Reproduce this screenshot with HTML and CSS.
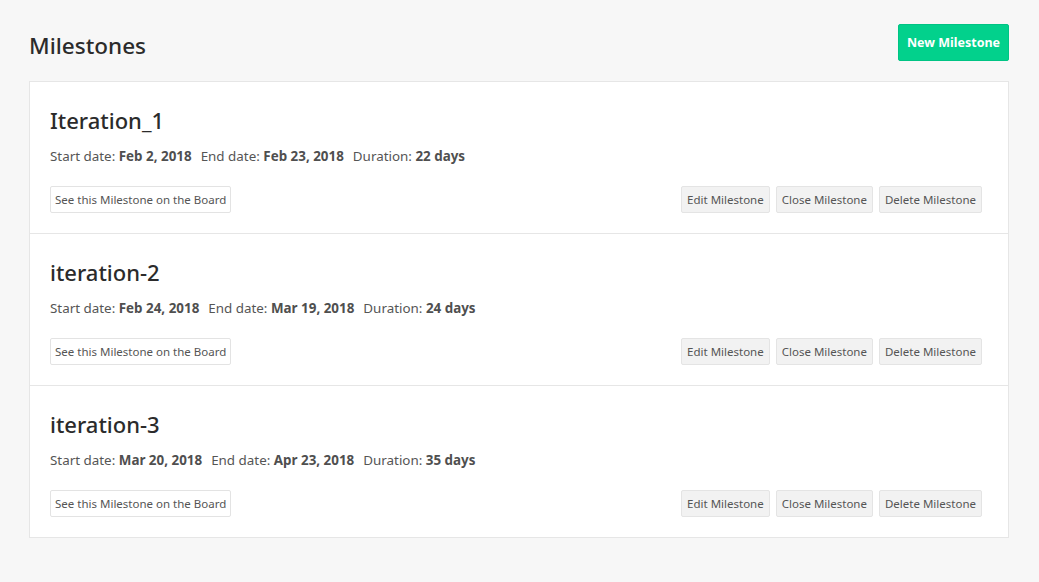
FILE: index.html
```html
<!DOCTYPE html>
<html>
<head>
<meta charset="utf-8">
<link rel="stylesheet" href="styles.css">
</head>
<body>
<div class="page">
  <header class="head">
    <h1 class="title">Milestones</h1>
    <button class="btn-new">New Milestone</button>
  </header>
  <div class="card">
    <div class="item">
      <h2 class="name">Iteration_1</h2>
      <p class="meta">Start date: <b>Feb 2, 2018</b><span class="sep"></span>End date: <b>Feb 23, 2018</b><span class="sep"></span>Duration: <b>22 days</b></p>
      <div class="actions">
        <button class="btn btn-light">See this Milestone on the Board</button>
        <div class="right">
          <button class="btn btn-gray">Edit Milestone</button>
          <button class="btn btn-gray">Close Milestone</button>
          <button class="btn btn-gray">Delete Milestone</button>
        </div>
      </div>
    </div>
    <div class="item">
      <h2 class="name">iteration-2</h2>
      <p class="meta">Start date: <b>Feb 24, 2018</b><span class="sep"></span>End date: <b>Mar 19, 2018</b><span class="sep"></span>Duration: <b>24 days</b></p>
      <div class="actions">
        <button class="btn btn-light">See this Milestone on the Board</button>
        <div class="right">
          <button class="btn btn-gray">Edit Milestone</button>
          <button class="btn btn-gray">Close Milestone</button>
          <button class="btn btn-gray">Delete Milestone</button>
        </div>
      </div>
    </div>
    <div class="item">
      <h2 class="name">iteration-3</h2>
      <p class="meta">Start date: <b>Mar 20, 2018</b><span class="sep"></span>End date: <b>Apr 23, 2018</b><span class="sep"></span>Duration: <b>35 days</b></p>
      <div class="actions">
        <button class="btn btn-light">See this Milestone on the Board</button>
        <div class="right">
          <button class="btn btn-gray">Edit Milestone</button>
          <button class="btn btn-gray">Close Milestone</button>
          <button class="btn btn-gray">Delete Milestone</button>
        </div>
      </div>
    </div>
  </div>
</div>
</body>
</html>
```

FILE: styles.css
```css
html, body {
  margin: 0;
  padding: 0;
  background: #f7f7f7;
}
body {
  font-family: "Noto Sans", "Open Sans", sans-serif;
  color: #333;
}
.page {
  padding: 24px 30px 0 29px;
}
.head {
  display: flex;
  justify-content: space-between;
  align-items: center;
  height: 37px;
  margin-bottom: 20px;
}
.title {
  margin: 0;
  font-size: 22.5px;
  font-weight: 500;
  color: #2b2b2b;
  padding-top: 5px;
}
.btn-new {
  height: 37px;
  width: 111px;
  border: 1px solid #00c484;
  border-radius: 2px;
  background: #02d18c;
  color: #fff;
  font-family: inherit;
  font-size: 12.5px;
  font-weight: 700;
  padding: 0;
}
.card {
  background: #fff;
  border: 1px solid #e6e6e6;
}
.item {
  padding: 23px 26px 20px 20px;
  border-bottom: 1px solid #e6e6e6;
}
.item:last-child {
  border-bottom: none;
}
.name {
  margin: 0;
  font-size: 22px;
  font-weight: 500;
  line-height: 30px;
  color: #2b2b2b;
}
.meta {
  margin: 11px 0 0;
  font-size: 13.4px;
  line-height: 20px;
  color: #555;
}
.meta b {
  font-weight: 700;
  color: #4f4f4f;
}
.sep {
  display: inline-block;
  width: 9px;
}
.actions {
  display: flex;
  justify-content: space-between;
  margin-top: 20px;
}
.right {
  display: flex;
  gap: 6px;
}
.btn {
  height: 27px;
  font-family: inherit;
  font-size: 11.5px;
  color: #555;
  padding: 0 5px;
  border-radius: 2px;
}
.btn-light {
  background: #fff;
  border: 1px solid #e3e3e3;
  padding: 0 4px;
}
.btn-gray {
  background: #f2f2f2;
  border: 1px solid #e4e4e4;
}
```
